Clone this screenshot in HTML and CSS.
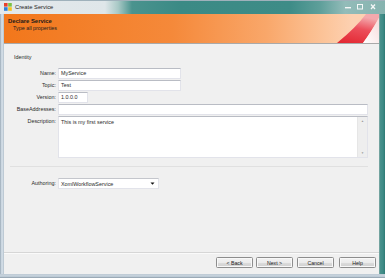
FILE: index.html
```html
<!DOCTYPE html>
<html>
<head>
<meta charset="utf-8">
<link rel="stylesheet" href="styles.css">
</head>
<body>
<div class="window">
  <div class="titlebar">
    <svg class="appicon" width="8" height="8" viewBox="0 0 8 8">
      <rect x="0" y="0" width="3.6" height="3.6" fill="#e8402a"/>
      <rect x="4.2" y="0" width="3.6" height="3.6" fill="#7cc242"/>
      <rect x="0" y="4.2" width="3.6" height="3.6" fill="#2f7fd8"/>
      <rect x="4.2" y="4.2" width="3.6" height="3.6" fill="#f7c21f"/>
    </svg>
    <span class="title">Create Service</span>
    <div class="caption">
      <svg width="8" height="6" viewBox="0 0 8 6"><rect x="1" y="3" width="6" height="1.4" fill="#f4f7f7"/></svg>
      <svg width="8" height="6" viewBox="0 0 8 6"><rect x="1.5" y="0.5" width="5" height="4.5" fill="none" stroke="#f4f7f7" stroke-width="1"/></svg>
      <svg width="10" height="6" viewBox="0 0 10 6"><path d="M3 0.5 L7 5 M7 0.5 L3 5" stroke="#f4f7f7" stroke-width="1.3"/></svg>
    </div>
  </div>
  <div class="frame">
    <div class="border-left"></div>
    <div class="client">
      <div class="header">
        <div class="header-title">Declare Service</div>
        <div class="header-sub">Type all properties</div>
        <svg class="swoosh" width="44" height="30" viewBox="331 0 44 30" preserveAspectRatio="none">
          <defs>
            <linearGradient id="red" x1="0" y1="1" x2="0.3" y2="0">
              <stop offset="0" stop-color="#e2252f"/>
              <stop offset="0.6" stop-color="#ec4f5b"/>
              <stop offset="1" stop-color="#f4a9ad"/>
            </linearGradient>
            <linearGradient id="wht" x1="0" y1="1" x2="1" y2="0">
              <stop offset="0" stop-color="#ffffff"/>
              <stop offset="1" stop-color="#f7dada"/>
            </linearGradient>
          </defs>
          <path d="M333,30 Q352,14 362,0 L375,0 L375,4 Q367,19 359,30 Z" fill="url(#red)"/>
          <path d="M359,30 Q367,19 375,4 L375,30 Z" fill="url(#wht)"/>
        </svg>
      </div>
      <div class="content">
        <div class="group">
          <div class="group-title">Identity</div>
          <div class="form">
            <label class="lbl">Name:</label>
            <div class="field"><div class="tb w-name">MyService</div></div>
            <label class="lbl">Topic:</label>
            <div class="field"><div class="tb w-name">Test</div></div>
            <label class="lbl">Version:</label>
            <div class="field"><div class="tb w-ver">1.0.0.0</div></div>
            <label class="lbl">BaseAddresses:</label>
            <div class="field"><div class="tb w-full"></div></div>
            <label class="lbl">Description:</label>
            <div class="field">
              <div class="ta">
                <div class="ta-text">This is my first service</div>
                <div class="scroll">
                  <span class="sarrow">&#9650;</span>
                  <span class="sarrow">&#9660;</span>
                </div>
              </div>
            </div>
          </div>
        </div>
        <div class="auth">
          <label class="lbl">Authoring:</label>
          <div class="combo">
            <span>XomlWorkflowService</span>
            <svg width="5" height="3" viewBox="0 0 5 3"><path d="M0.5 0.5 L4.5 0.5 L2.5 2.7 Z" fill="#111"/></svg>
          </div>
        </div>
      </div>
      <div class="footer">
        <button class="btn b-back">&lt; Back</button>
        <button class="btn b-next">Next &gt;</button>
        <button class="btn b-cancel">Cancel</button>
        <button class="btn b-help">Help</button>
      </div>
    </div>
    <div class="border-right"></div>
  </div>
  <div class="border-bottom"></div>
</div>
</body>
</html>
```

FILE: styles.css
```css
* { box-sizing: border-box; }
html, body { margin: 0; padding: 0; }
body {
  width: 385px;
  height: 278px;
  overflow: hidden;
  font-family: "Liberation Sans", Arial, sans-serif;
  font-size: 5.4px;
  color: #2a2a2a;
}
.window {
  width: 385px;
  height: 278px;
  display: flex;
  flex-direction: column;
}
.titlebar {
  height: 14px;
  display: flex;
  align-items: center;
  padding: 0 0 1px 4px;
  background: linear-gradient(to right, #e4e9ec 0, #dfe6e9 105px, #a9c9c6 118px, #4a938e 132px, #3b8a85 180px, #3e8c87 290px, #5e9f9a 320px, #93bcb9 345px, #86b3af 385px);
  border-top: 1px solid #9fb1bb;
}
.appicon { flex: none; }
.title {
  margin-left: 3px;
  font-size: 5.8px;
  color: #1c1c1c;
}
.caption {
  margin-left: auto;
  margin-right: 7px;
  display: flex;
  align-items: center;
  gap: 4px;
}
.frame {
  flex: 1;
  display: flex;
  min-height: 0;
}
.border-left {
  width: 4px;
  background: linear-gradient(to right, #8a9aa8 0, #c9d5df 1px, #d3dde6 3px, #a7b6c2 4px);
}
.border-right {
  width: 6px;
  background: linear-gradient(to right, #9bb5b3 0, #4a928d 1px, #3e8b86 4px, #2f7a75 6px);
}
.border-bottom {
  height: 4px;
  background: linear-gradient(to bottom, #b7c4cf 0, #c9d4de 1px, #b9c7d3 3px, #7c8c99 4px);
}
.client {
  flex: 1;
  background: #f0f0f0;
  display: flex;
  flex-direction: column;
  min-width: 0;
}
.header {
  position: relative;
  height: 30px;
  padding: 4px 0 0 4px;
  background: linear-gradient(to right, #f2771b 0, #f5893a 45%, #f9a76a 70%, #fcc59b 86%, #fdd1b2 93%);
  border-bottom: 1px solid #a9a9a9;
}
.header-title {
  font-weight: bold;
  font-size: 5.9px;
  line-height: 7px;
  color: #1a1a1a;
}
.header-sub {
  margin-left: 5px;
  line-height: 6px;
  color: #222;
}
.swoosh {
  position: absolute;
  right: 0;
  top: 0;
  height: 29px;
}
.content {
  flex: 1;
  padding: 10px 11px 0 0;
}
.group {
  border-bottom: 1px solid #e0e0e0;
  margin-left: 6px;
  padding-bottom: 8px;
}
.group-title {
  margin-left: 4px;
  line-height: 7px;
}
.form {
  margin-top: 7px;
  margin-left: -6px;
  display: grid;
  grid-template-columns: 52px 1fr;
  column-gap: 2px;
  row-gap: 1px;
}
.lbl {
  text-align: right;
  line-height: 11px;
  white-space: nowrap;
}
.field { display: flex; }
.tb {
  height: 11px;
  background: #fff;
  border: 1px solid #e2e3ea;
  border-top-color: #b9bcc4;
  padding-left: 2px;
  line-height: 9px;
}
.w-name { width: 123px; }
.w-ver { width: 30px; }
.w-full { width: 100%; }
.ta {
  width: 100%;
  height: 42px;
  background: #fff;
  border: 1px solid #e2e3ea;
  border-top-color: #b9bcc4;
  display: flex;
}
.ta-text {
  flex: 1;
  padding: 2px 0 0 2px;
  line-height: 6px;
}
.scroll {
  width: 10px;
  background: #eeeeee;
  border-left: 1px solid #e6e6e6;
  display: flex;
  flex-direction: column;
  justify-content: space-between;
  align-items: center;
  padding: 2px 0;
}
.sarrow {
  font-size: 3px;
  color: #9a9a9a;
  line-height: 4px;
}
.auth {
  margin-top: 11px;
  display: flex;
  align-items: center;
  gap: 2px;
}
.auth .lbl { width: 52px; }
.combo {
  width: 101px;
  height: 11px;
  background: #fff;
  border: 1px solid #e2e3ea;
  border-top-color: #c4c6cc;
  display: flex;
  align-items: center;
  justify-content: space-between;
  padding: 0 3px 0 2px;
}
.footer {
  height: 22px;
  border-top: 1px solid #d6d6d6;
  box-shadow: inset 0 1px 0 #fafafa;
  display: flex;
  justify-content: flex-end;
  padding: 4px 3px 0 0;
}
.btn {
  width: 37px;
  height: 11px;
  padding: 0;
  font-family: "Liberation Sans", Arial, sans-serif;
  font-size: 5.2px;
  color: #222;
  border: 1px solid #8d8d8d;
  border-radius: 1.5px;
  background: linear-gradient(to bottom, #f3f3f3 0, #ebebeb 50%, #dddddd 51%, #cfcfcf 100%);
  box-shadow: inset 0 0 0 1px #f8f8f8;
}
.b-next { margin-left: 3px; }
.b-cancel { margin-left: 4px; }
.b-help { margin-left: 5px; }
```
